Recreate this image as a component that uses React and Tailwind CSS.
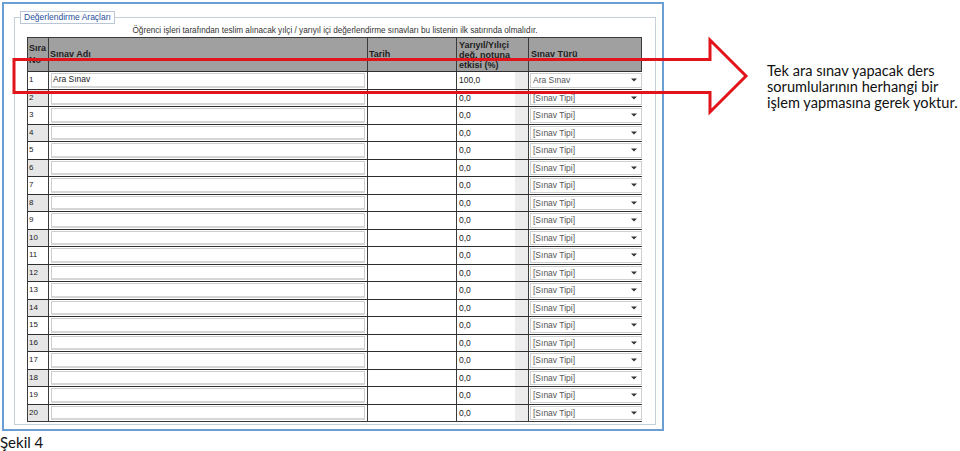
const rows = Array.from({ length: 20 }, (_, i) => i + 1);

const Caret = () => (
  <svg width="6" height="4" viewBox="0 0 6 4" className="mr-[4px]">
    <path d="M0 0.5h6L3 3.5z" fill="#333" />
  </svg>
);

const Row = ({ n }) => {
  const first = n === 1;
  return (
    <div className="grid grid-cols-[20px_319px_89px_72px_115px] h-[17.5px] border-t-[1.5px] border-[#2e2e2e]">
      <div className={`pl-[1px] text-[8px] leading-[16px] text-[#222] ${n % 2 === 0 ? 'bg-[#e6e6e6]' : 'bg-white'}`}>
        {n}
      </div>
      <div className="border-l border-[#3a3a3a] px-[2px] pt-[1px] pb-[1px] bg-white">
        <div className="h-full border border-[#cdcdcd] border-b-2 border-b-[#d6d6d6] bg-white pl-[1px] text-[8.5px] leading-[11px] text-[#222]">
          {first ? 'Ara Sınav' : ''}
        </div>
      </div>
      <div className="border-l border-[#3a3a3a] bg-white" />
      <div className="border-l border-[#3a3a3a] flex">
        <div className="w-[58px] bg-white pl-[2px] text-[8.5px] leading-[16px] text-[#222]">{first ? '100,0' : '0,0'}</div>
        <div className="flex-1 bg-[#ececec]" />
      </div>
      <div className="border-l border-[#3a3a3a] px-[1px] py-[1px] bg-white">
        <div className="h-full border border-[#cfcfcf] flex items-center justify-between pl-[2px] text-[8.5px] text-[#555]">
          <span>{first ? 'Ara Sınav' : '[Sınav Tipi]'}</span>
          <Caret />
        </div>
      </div>
    </div>
  );
};

export default function App() {
  return (
    <div className="relative w-[960px] h-[451px] bg-white overflow-hidden flex font-['Liberation_Sans',sans-serif]">
      <div className="w-[664px] shrink-0 flex flex-col">
        <div className="mt-[2px] ml-[2px] h-[431px] border-2 border-[#6b9fd3] bg-white">
          <fieldset className="mt-[7px] ml-[10px] w-[642px] h-[414px] border border-[#c6ced8]">
            <legend className="ml-[5px] border border-[#b9c6d6] px-[3px] text-[8.5px] leading-[11px] text-[#1f4f9c]">
              Değerlendirme Araçları
            </legend>
            <p className="mt-[2px] text-center text-[8.2px] leading-[10px] text-[#333]">
              Öğrenci işleri tarafından teslim alınacak yılçi / yarıyıl içi değerlendirme sınavları bu listenin ilk satırında olmalıdır.
            </p>
            <div className="ml-[12px] mt-[1px] w-[615px] border border-[#3a3a3a]">
              <div className="grid grid-cols-[20px_319px_89px_72px_115px] h-[33px] bg-[#a0a0a0] text-[9px] font-bold text-[#1e1e1e] leading-[10px]">
                <div className="pl-[1px] pt-[4px] leading-[12px]">Sıra<br />No</div>
                <div className="flex items-center pl-[1px] pb-[2px] border-l border-[#3a3a3a]">Sınav Adı</div>
                <div className="flex items-center pl-[1px] pb-[1px] border-l border-[#3a3a3a]">Tarih</div>
                <div className="flex items-center pl-[2px] border-l border-[#3a3a3a]">Yarıyıl/Yılıçi<br />değ. notuna<br />etkisi (%)</div>
                <div className="flex items-center pl-[2px] pb-[1px] border-l border-[#3a3a3a]">Sınav Türü</div>
              </div>
              {rows.map((n) => (
                <Row key={n} n={n} />
              ))}
            </div>
          </fieldset>
        </div>
        <div className="mt-[3px] text-[15px] leading-[17px] text-[#111] font-['Lato',sans-serif]">Şekil 4</div>
      </div>
      <div className="pl-[103px] pt-[63px] whitespace-nowrap text-[14.6px] leading-[16px] text-[#111] font-['Lato',sans-serif]">
        Tek ara sınav yapacak ders
        <br />
        sorumlularının herhangi bir
        <br />
        işlem yapmasına gerek yoktur.
      </div>
      <svg className="absolute left-0 top-0 pointer-events-none" width="960" height="451" viewBox="0 0 960 451">
        <polygon
          points="14,59.5 710,59.5 710,40 746,76 710,112 710,92.5 14,92.5"
          fill="none"
          stroke="#e2141b"
          strokeWidth="3"
          strokeLinejoin="miter"
        />
      </svg>
    </div>
  );
}
